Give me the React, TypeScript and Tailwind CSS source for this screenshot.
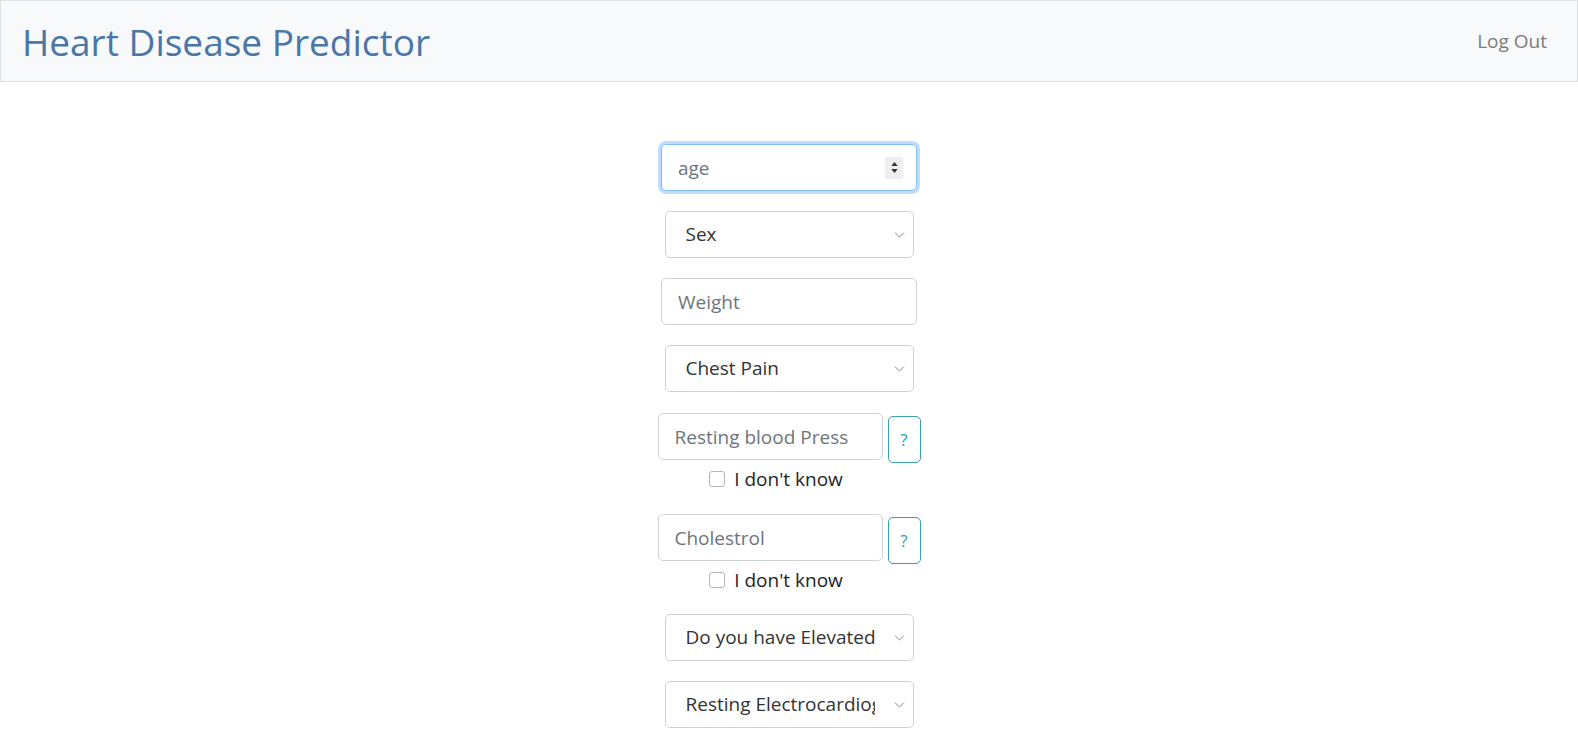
import { ChevronDown } from 'lucide-react'

const FONT = "font-['Open_Sans','Noto_Sans',sans-serif]"

function Select({ label }: { label: string }) {
  return (
    <div className="relative w-[249px] h-[47px]">
      <select
        defaultValue=""
        className="h-full w-full appearance-none rounded-[5px] border border-[#cfd2d6] bg-white pl-[20px] pr-[38px] text-[19px] text-[#333] outline-none"
      >
        <option value="" disabled>
          {label}
        </option>
      </select>
      <ChevronDown
        size={17}
        strokeWidth={1.2}
        className="pointer-events-none absolute right-[6px] top-1/2 -translate-y-1/2 text-[#777]"
      />
    </div>
  )
}

function TextInput({ placeholder, width = 'w-[256px]' }: { placeholder: string; width?: string }) {
  return (
    <input
      type="text"
      placeholder={placeholder}
      className={`${width} h-[47px] rounded-[5px] border border-[#cfd2d6] bg-white px-[16px] text-[19px] text-[#495057] placeholder:text-[#6c757d] outline-none`}
    />
  )
}

function HelpField({ placeholder }: { placeholder: string }) {
  return (
    <div className="flex items-start gap-[5px] pt-[1px]">
      <div className="flex flex-col items-center">
        <TextInput placeholder={placeholder} width="w-[225px]" />
        <label className="ml-3 mb-[2px] mt-[7px] flex items-center gap-[9px] text-[19px] leading-[24px] text-[#212529]">
          <span className="inline-block size-[16px] rounded-[3px] border border-[#b5b5b5] bg-white" />
          I don&apos;t know
        </label>
      </div>
      <button
        type="button"
        className="mt-[3px] h-[47px] w-[33px] rounded-[5px] border border-[#3a9fae] text-[17px] text-[#2a9fb0]"
      >
        ?
      </button>
    </div>
  )
}

export default function App() {
  return (
    <div className={`min-h-screen bg-white ${FONT}`}>
      <nav className="flex h-[82px] items-center justify-between border border-[#dfe2e5] bg-[#f8f9fa] pl-[21px] pr-[30px]">
        <span className="text-[37px] leading-none text-[#4a76a8]">Heart Disease Predictor</span>
        <a href="#" className="text-[19px] text-[#7c7c7d]">
          Log Out
        </a>
      </nav>

      <form className="flex flex-col items-center gap-[20px] pt-[62px]">
        <div className="relative w-[256px]">
          <input
            type="text"
            placeholder="age"
            className="h-[47px] w-full rounded-[5px] border border-[#80bdff] bg-white px-[16px] text-[19px] text-[#495057] shadow-[0_0_0_3px_rgba(0,123,255,0.25)] placeholder:text-[#6c757d] outline-none"
          />
          <div className="absolute right-[14px] top-1/2 flex h-[22px] w-[18px] -translate-y-1/2 flex-col items-center justify-center gap-[3px] bg-[#efefef]">
            <svg width="7" height="4" viewBox="0 0 8 5">
              <path d="M0 5 L4 0 L8 5 Z" fill="#333" />
            </svg>
            <svg width="7" height="4" viewBox="0 0 8 5">
              <path d="M0 0 L4 5 L8 0 Z" fill="#333" />
            </svg>
          </div>
        </div>

        <Select label="Sex" />
        <TextInput placeholder="Weight" />
        <Select label="Chest Pain" />
        <HelpField placeholder="Resting blood Press" />
        <HelpField placeholder="Cholestrol" />
        <Select label="Do you have Elevated fasting blood sugar" />
        <Select label="Resting Electrocardiographic results" />
      </form>
    </div>
  )
}
